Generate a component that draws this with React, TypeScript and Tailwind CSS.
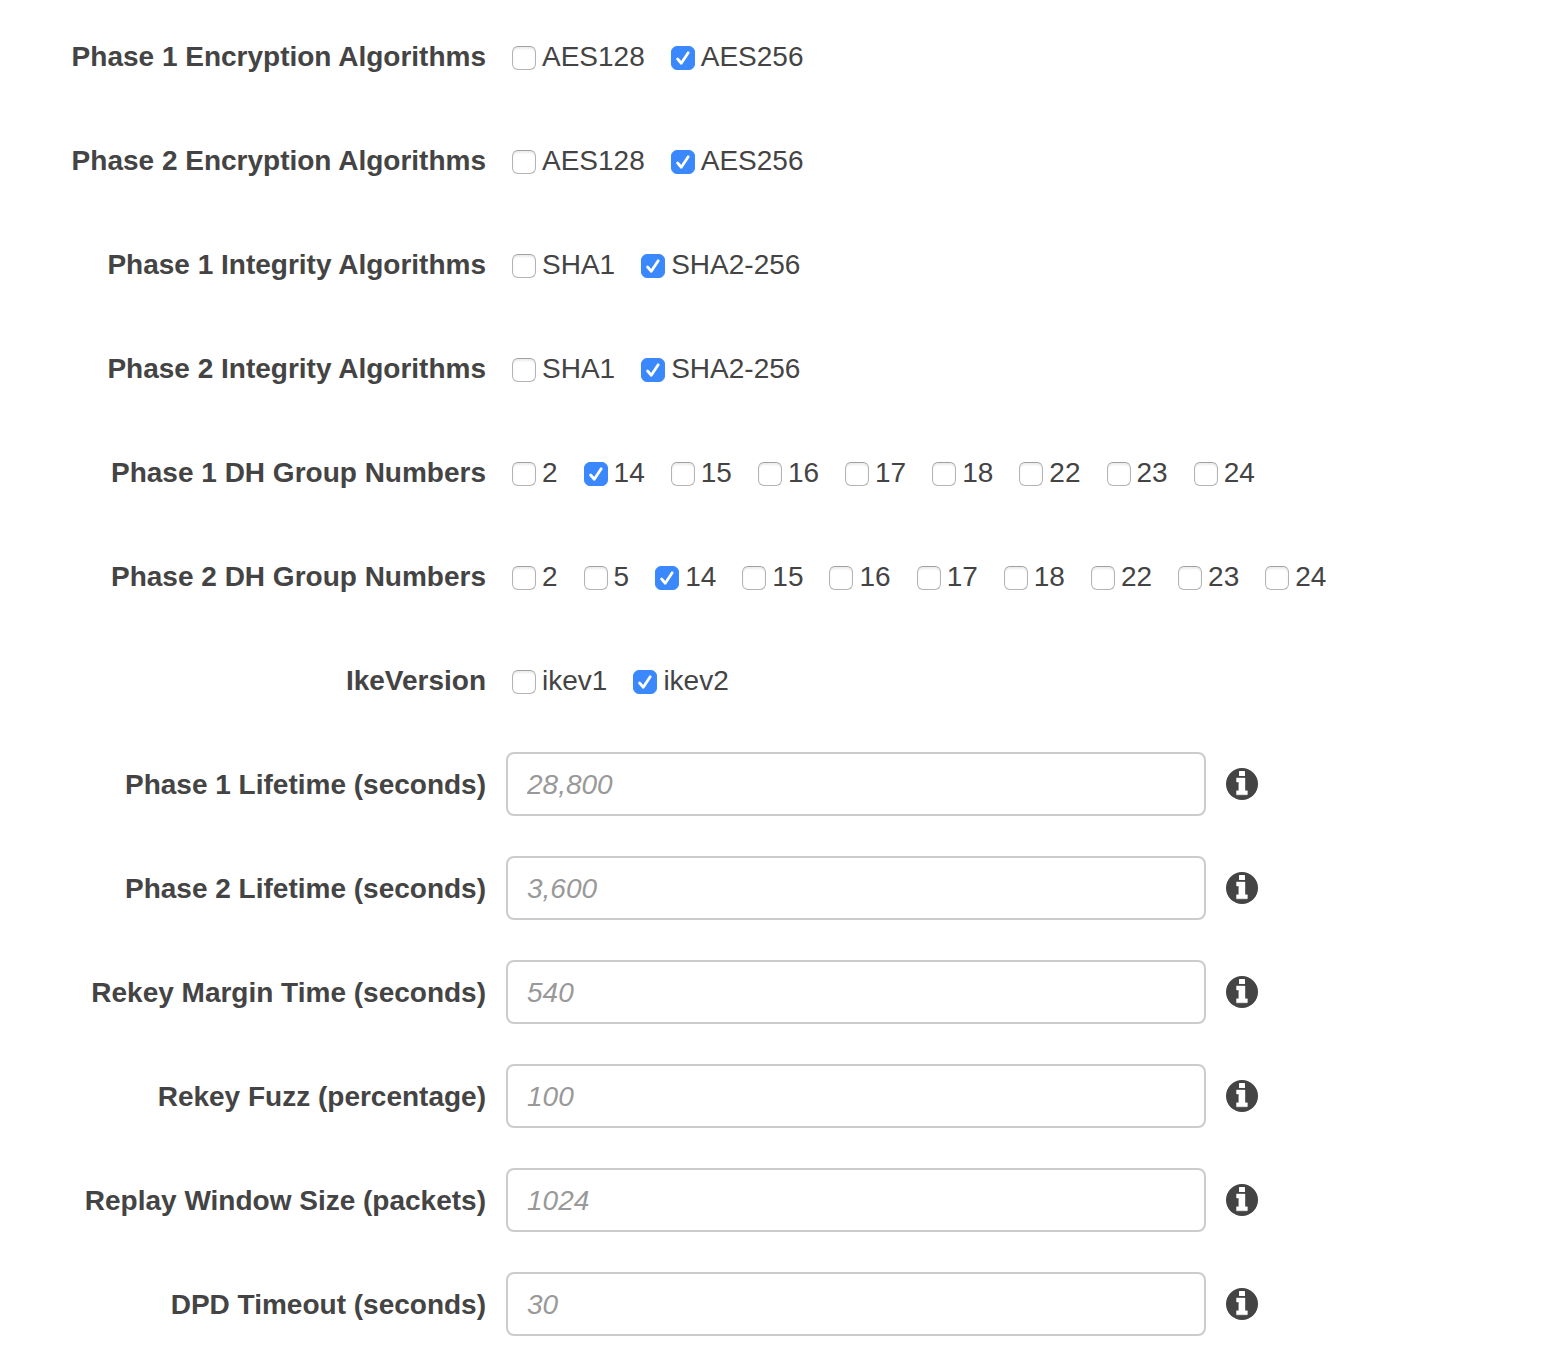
type Option = { name: string; checked?: boolean };

const options = (names: string[], selected: string): Option[] =>
  names.map((name) => ({ name, checked: name === selected }));

const choiceRows = [
  { id: "p1-encryption", label: "Phase 1 Encryption Algorithms", options: options(["AES128", "AES256"], "AES256") },
  { id: "p2-encryption", label: "Phase 2 Encryption Algorithms", options: options(["AES128", "AES256"], "AES256") },
  { id: "p1-integrity", label: "Phase 1 Integrity Algorithms", options: options(["SHA1", "SHA2-256"], "SHA2-256") },
  { id: "p2-integrity", label: "Phase 2 Integrity Algorithms", options: options(["SHA1", "SHA2-256"], "SHA2-256") },
  {
    id: "p1-dh",
    label: "Phase 1 DH Group Numbers",
    options: options(["2", "14", "15", "16", "17", "18", "22", "23", "24"], "14"),
  },
  {
    id: "p2-dh",
    label: "Phase 2 DH Group Numbers",
    options: options(["2", "5", "14", "15", "16", "17", "18", "22", "23", "24"], "14"),
  },
  { id: "ike-version", label: "IkeVersion", options: options(["ikev1", "ikev2"], "ikev2") },
];

const inputRows = [
  { id: "p1-lifetime", label: "Phase 1 Lifetime (seconds)", placeholder: "28,800" },
  { id: "p2-lifetime", label: "Phase 2 Lifetime (seconds)", placeholder: "3,600" },
  { id: "rekey-margin", label: "Rekey Margin Time (seconds)", placeholder: "540" },
  { id: "rekey-fuzz", label: "Rekey Fuzz (percentage)", placeholder: "100" },
  { id: "replay-window", label: "Replay Window Size (packets)", placeholder: "1024" },
  { id: "dpd-timeout", label: "DPD Timeout (seconds)", placeholder: "30" },
];

const rowClass = "flex min-h-16 items-center gap-5";
const labelClass = "w-[486px] shrink-0 pt-0.5 text-right font-bold";

function InfoIcon() {
  return (
    <svg viewBox="0 0 32 32" className="size-8 shrink-0" role="img" aria-label="More information">
      <circle cx="16" cy="16" r="16" className="fill-[#444444]" />
      <rect x="13" y="3" width="6" height="5" rx="0.5" className="fill-white" />
      <path d="M10.5 10H19V22.8H21.4V26.8H10.5V22.8H12.8V14H10.5Z" className="fill-white stroke-white" strokeWidth="0.4" strokeLinejoin="round" />
    </svg>
  );
}

function Checkbox({ name, checked }: Option) {
  return (
    <label className="flex items-center gap-1.5 pt-0.5">
      <span className="relative mt-0.5 size-6 shrink-0">
        <input
          type="checkbox"
          defaultChecked={checked}
          className="peer block size-6 appearance-none rounded-md border border-[#b4b4b4] border-t-[#a0a0a0] bg-white shadow-[inset_0_2px_2px_#ececec] checked:border-[#3b88fd] checked:bg-[#3b88fd] checked:shadow-none"
        />
        <svg
          viewBox="0 0 24 24"
          className="pointer-events-none absolute inset-0 hidden size-6 fill-none stroke-white peer-checked:block"
          strokeWidth="2.8"
          strokeLinecap="round"
          strokeLinejoin="round"
          aria-hidden="true"
        >
          <path d="M6.6 13 10.3 17.2 17.2 6.8" />
        </svg>
      </span>
      {name}
    </label>
  );
}

export default function App() {
  return (
    <form className="flex min-h-screen flex-col gap-10 bg-white py-6 pr-6 font-['Liberation_Sans',Arial,sans-serif] text-[28px] leading-10 text-[#444444]">
      {choiceRows.map((row) => (
        <div key={row.id} role="group" aria-labelledby={row.id} className={rowClass}>
          <span id={row.id} className={labelClass}>
            {row.label}
          </span>
          <div className="flex flex-wrap gap-x-[26px] pl-1.5">
            {row.options.map((option) => (
              <Checkbox key={option.name} {...option} />
            ))}
          </div>
        </div>
      ))}
      {inputRows.map((row) => (
        <div key={row.id} className={rowClass}>
          <label htmlFor={row.id} className={labelClass}>
            {row.label}
          </label>
          <input
            id={row.id}
            type="text"
            placeholder={row.placeholder}
            className="h-16 w-full max-w-[700px] min-w-0 rounded-lg border-2 border-[#cccccc] bg-white px-[19px] pt-0.5 placeholder:text-[#999999] placeholder:italic"
          />
          <InfoIcon />
        </div>
      ))}
    </form>
  );
}
